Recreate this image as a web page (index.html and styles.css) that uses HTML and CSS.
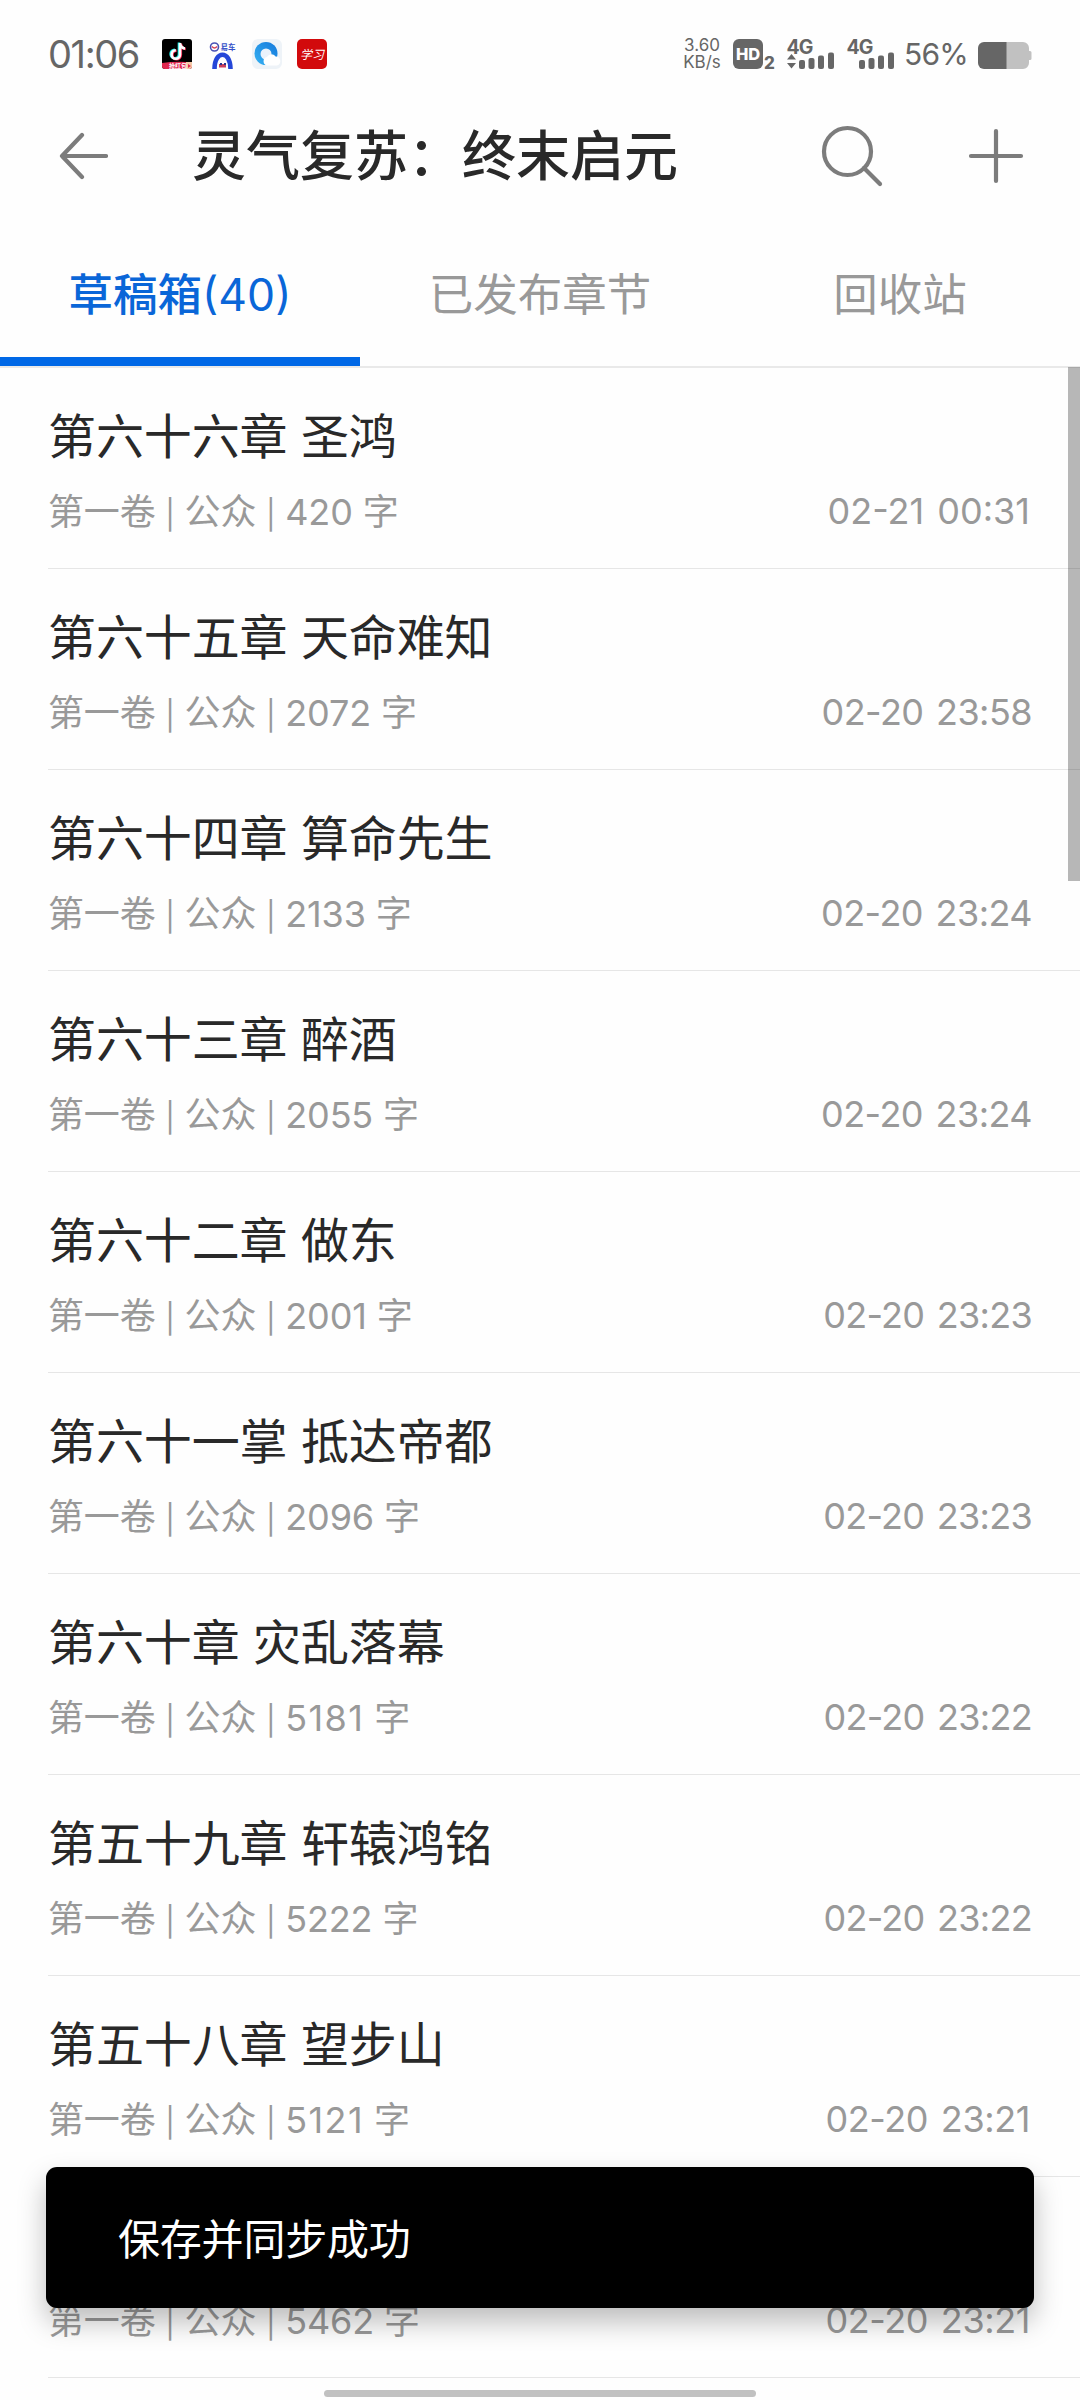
FILE: index.html
```html
<!DOCTYPE html>
<html lang="zh-CN">
<head>
<meta charset="utf-8">
<title>草稿箱</title>
<link rel="stylesheet" href="styles.css">
</head>
<body>
<div class="screen">
  <header class="status">
    <span class="clock">01:06</span>
    <svg class="apps" width="166" height="30" viewBox="0 0 166 30">
      <clipPath id="tile"><rect width="30" height="30" rx="3"/></clipPath>
      <g clip-path="url(#tile)">
        <rect width="30" height="30" fill="#000"/>
        <g fill="none" stroke-width="2.6">
          <path d="M17 3.500V15a4.200 4.200 0 1 1-4.200-4.200M17 4c.5 3 2.500 4.800 5 5" stroke="#25f4ee"/>
          <path d="M18.800 4.500V16a4.200 4.200 0 1 1-4.200-4.200M18.800 5c.5 3 2.500 4.800 5 5" stroke="#fe2c55"/>
          <path d="M18 4V15.500a4.200 4.200 0 1 1-4.200-4.200M18 4.500c.5 3 2.500 4.800 5 5" stroke="#fff"/>
        </g>
        <path d="M0 24q15-2 30-.5V30H0z" fill="#e0284f"/>
        <path d="M24 23h6v7h-6z" fill="#f6c9a8"/>
        <text x="7" y="28.500" class="app-label">抢红包</text>
        <path d="M26 25l3 2-3 2z" fill="#e0284f"/>
      </g>
      <g transform="translate(47 3)">
        <circle cx="5.500" cy="5" r="4" fill="#fff" stroke="#4a52b5" stroke-width="1.600"/>
        <path d="M3 4.500q2.500 3 5 0" fill="none" stroke="#d8435a" stroke-width="1.500"/>
        <text x="11.500" y="7.600" class="app-name">易车</text>
        <path d="M5.500 27C5.500 8 21.500 8 21.500 27" fill="none" stroke="#2547d8" stroke-width="4.600"/>
        <path d="M10 22h7v3.500h-7z" fill="#c93f5d"/>
        <path d="M11 21h2v2h-2zM15 21h2v2h-2z" fill="#27348f"/>
      </g>
      <g transform="translate(90)">
        <linearGradient id="ring" x1="0" y1="1" x2="1" y2="0"><stop offset="0" stop-color="#36b2f2"/><stop offset="1" stop-color="#1478dc"/></linearGradient>
        <rect width="30" height="30" rx="6" fill="#eef3f8"/>
        <circle cx="14" cy="14.500" r="11.500" fill="url(#ring)"/>
        <circle cx="14" cy="15" r="5.500" fill="#eaf2fb"/>
        <path d="M15.500 26.500a4.300 4.300 0 0 1-.5-8.500 5 5 0 0 1 8.500-.5 4.600 4.600 0 0 1 1.500 9z" fill="#fff"/>
      </g>
      <g transform="translate(135)">
        <rect width="30" height="30" rx="5" fill="#d20a0c"/>
        <text x="3" y="20" class="app-script">学习</text>
      </g>
    </svg>
    <div class="speed"><span>3.60</span><span>KB/s</span></div>
    <svg class="signals" width="164" height="40" viewBox="0 -4 164 40" fill="#666">
      <rect y="1" width="30" height="30" rx="6"/>
      <text x="3" y="22" class="hd">HD</text>
      <text x="31" y="30.500" class="sim">2</text>
      <text x="53.500" y="16" class="net">4G</text>
      <path d="M58.500 16l4.500 5.500h-9zM58.500 30.500l4.500-5.500h-9z"/>
      <rect x="66" y="22" width="6" height="9" rx="2"/><rect x="75.500" y="20" width="6" height="11" rx="2"/><rect x="85" y="17.500" width="6" height="13.500" rx="2"/><rect x="95" y="14.500" width="6" height="16.500" rx="2"/>
      <text x="113.500" y="16" class="net">4G</text>
      <rect x="126" y="22" width="6" height="9" rx="2"/><rect x="135.500" y="20" width="6" height="11" rx="2"/><rect x="145" y="17.500" width="6" height="13.500" rx="2"/><rect x="155" y="14.500" width="6" height="16.500" rx="2"/>
    </svg>
    <span class="percent">56%</span>
    <svg class="battery" width="54" height="27" viewBox="0 0 54 27">
      <path d="M28 0H45a6 6 0 0 1 6 6V9h1q1.500 0 1.500 1.500v6q0 1.500-1.500 1.500h-1v3a6 6 0 0 1-6 6H28z" fill="#c1c1c1"/>
      <path d="M6 0H28.500V27H6a6 6 0 0 1-6-6V6a6 6 0 0 1 6-6z" fill="#666"/>
    </svg>
  </header>

  <div class="toolbar">
    <svg class="back" width="52" height="52" viewBox="0 0 52 52"><path d="M50 26H6M26 5L6 26l20 21"/></svg>
    <h1 class="book">灵气复苏：终末启元</h1>
    <svg class="search" width="64" height="64" viewBox="0 0 64 64"><circle cx="27.500" cy="27.500" r="23.500"/><path d="M44 44l16 16"/></svg>
    <svg class="add" width="56" height="56" viewBox="0 0 56 56"><path d="M28 3V53M3 28H53"/></svg>
  </div>

  <nav class="tabs">
    <div class="tab active">草稿箱<span class="count">(40)</span></div>
    <div class="tab">已发布章节</div>
    <div class="tab">回收站</div>
  </nav>

  <main class="list">
    <article class="row"><h2>第六十六章 圣鸿</h2><div class="meta"><span>第一卷<i>|</i>公众<i>|</i>420 字</span><time class="wide">02-21 00:31</time></div></article>
    <article class="row"><h2>第六十五章 天命难知</h2><div class="meta"><span>第一卷<i>|</i>公众<i>|</i>2072 字</span><time>02-20 23:58</time></div></article>
    <article class="row"><h2>第六十四章 算命先生</h2><div class="meta"><span>第一卷<i>|</i>公众<i>|</i>2133 字</span><time>02-20 23:24</time></div></article>
    <article class="row"><h2>第六十三章 醉酒</h2><div class="meta"><span>第一卷<i>|</i>公众<i>|</i>2055 字</span><time>02-20 23:24</time></div></article>
    <article class="row"><h2>第六十二章 做东</h2><div class="meta"><span>第一卷<i>|</i>公众<i>|</i>2001 字</span><time class="tight">02-20 23:23</time></div></article>
    <article class="row"><h2>第六十一掌 抵达帝都</h2><div class="meta"><span>第一卷<i>|</i>公众<i>|</i>2096 字</span><time class="tight">02-20 23:23</time></div></article>
    <article class="row"><h2>第六十章 灾乱落幕</h2><div class="meta"><span>第一卷<i>|</i>公众<i>|</i><b>5181</b> 字</span><time class="tight">02-20 23:22</time></div></article>
    <article class="row"><h2>第五十九章 轩辕鸿铭</h2><div class="meta"><span>第一卷<i>|</i>公众<i>|</i>5222 字</span><time class="tight">02-20 23:22</time></div></article>
    <article class="row"><h2>第五十八章 望步山</h2><div class="meta"><span>第一卷<i>|</i>公众<i>|</i><b>5121</b> 字</span><time class="last">02-20 23:21</time></div></article>
    <article class="row"><h2></h2><div class="meta"><span>第一卷<i>|</i>公众<i>|</i>5462 字</span><time class="last">02-20 23:21</time></div></article>
    <div class="scrollbar"></div>
  </main>

  <div class="toast">保存并同步成功</div>
  <div class="home-bar"></div>
</div>
</body>
</html>
```
FILE: styles.css
```css
* { box-sizing: border-box; }

body {
  margin: 0;
  background: #fefefe;
  color: #292929;
  font-family: Inter, "Noto Sans CJK SC", sans-serif;
}

h1, h2 { margin: 0; font-weight: 400; }

.screen {
  position: relative;
  width: 1080px;
  height: 2400px;
  overflow: hidden;
}

/* status bar */
.status {
  display: flex;
  align-items: center;
  height: 108px;
  padding: 0 48px;
  color: #666;
}
.clock { width: 114px; font-size: 38px; letter-spacing: -1.4px; white-space: nowrap; }
.apps { flex: none; }
.app-label { font-size: 6px; font-weight: 700; fill: #fff; }
.app-name { font-size: 7.500px; font-weight: 700; fill: #3550c8; }
.app-script { font-size: 12px; font-style: italic; fill: #fff; }
.speed {
  display: flex;
  flex-direction: column;
  align-items: center;
  width: 38px;
  margin-left: auto;
  font-size: 17px;
  line-height: 17px;
}
.signals { flex: none; margin-left: 12px; }
.hd { font-size: 16.500px; font-weight: 800; fill: #fff; }
.sim { font-size: 17px; font-weight: 800; }
.net { font-size: 19.500px; font-weight: 700; letter-spacing: -1px; }
.percent { margin-left: 7px; width: 74px; font-size: 30px; line-height: 40px; letter-spacing: -0.8px; }
.battery { flex: none; margin-top: 3px; }

/* toolbar */
.toolbar {
  display: flex;
  align-items: center;
  height: 96px;
  padding: 0 56px;
}
.toolbar svg { flex: none; fill: none; stroke: #7c7c7c; stroke-width: 4.2px; stroke-linecap: round; stroke-linejoin: round; }
.book { flex: 1; margin-left: 84px; padding-top: 2px; font-size: 54px; font-weight: 500; line-height: 72px; white-space: nowrap; }
.toolbar .add { margin-left: 84px; }

/* tabs */
.tabs {
  display: grid;
  grid-template-columns: repeat(3, 1fr);
  height: 164px;
  border-bottom: 2px solid #e9e9e9;
}
.tab {
  display: flex;
  justify-content: center;
  padding-top: 61px;
  font-size: 44.500px;
  line-height: 60px;
  color: #999;
}
.tab.active { color: #0a66d8; font-weight: 500; border-bottom: 9px solid #0068e6; }
.count { font-weight: 400; }

/* chapter list */
.list { position: relative; }
.row {
  display: flex;
  flex-direction: column;
  gap: 21px;
  height: 201px;
  margin-left: 48px;
  padding: 40px 48px 0 0;
  border-bottom: 1px solid #e6e6e6;
}
.row h2 { height: 58px; font-size: 48px; line-height: 58px; letter-spacing: -0.1px; }
.meta {
  display: flex;
  justify-content: space-between;
  font-size: 36px;
  line-height: 50px;
  letter-spacing: -0.15px;
  color: #999;
}
.meta i { display: inline-block; width: 29px; font-size: 29px; line-height: 40px; font-style: normal; text-align: center; }
.meta b { font-weight: 400; letter-spacing: 1.4px; }
.meta time { line-height: 49px; letter-spacing: -0.55px; word-spacing: 3px; }
.meta .tight { letter-spacing: -0.7px; }
.meta .wide { margin-right: 2px; letter-spacing: 0; }
.meta .last { margin-right: 2px; letter-spacing: -0.4px; }
.scrollbar {
  position: absolute;
  top: -1px;
  right: 0;
  width: 12px;
  height: 514px;
  background: rgba(0, 0, 0, 0.28);
}

/* overlays */
.toast {
  position: absolute;
  left: 46px;
  top: 2167px;
  width: 988px;
  height: 141px;
  padding-left: 72px;
  border-radius: 11px;
  background: #000;
  color: #fff;
  font-size: 42px;
  line-height: 145px;
  letter-spacing: -0.2px;
  box-shadow: 0 14px 28px rgba(0, 0, 0, 0.26);
}
.home-bar {
  position: absolute;
  left: 324px;
  bottom: 3px;
  width: 432px;
  height: 7px;
  border-radius: 4px;
  background: #c1c1c1;
}
```
